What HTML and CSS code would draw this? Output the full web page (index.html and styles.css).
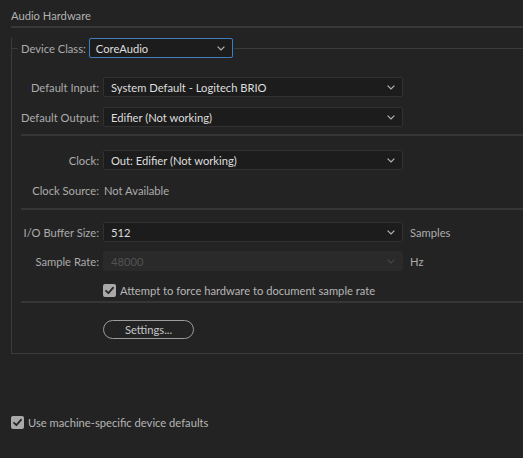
FILE: index.html
```html
<!DOCTYPE html>
<html>
<head>
<meta charset="utf-8">
<link rel="stylesheet" href="styles.css">
</head>
<body>
<div class="page">
  <div class="title">Audio Hardware</div>
  <div class="group">
    <div class="legend-row">
      <span class="seg-short"></span>
      <span class="legend-label">Device Class:</span>
      <div class="select focus legend-select"><span class="val">CoreAudio</span><svg class="chev" viewBox="0 0 8 5"><path d="M0.6 0.6 L4 4 L7.4 0.6" /></svg></div>
      <span class="seg-long"></span>
    </div>
    <div class="inner">
      <div class="row r-input">
        <span class="label">Default Input:</span>
        <div class="select"><span class="val">System Default - Logitech BRIO</span><svg class="chev" viewBox="0 0 8 5"><path d="M0.6 0.6 L4 4 L7.4 0.6" /></svg></div>
      </div>
      <div class="row r-output">
        <span class="label">Default Output:</span>
        <div class="select"><span class="val">Edifier (Not working)</span><svg class="chev" viewBox="0 0 8 5"><path d="M0.6 0.6 L4 4 L7.4 0.6" /></svg></div>
      </div>
      <div class="sep sep1"></div>
      <div class="row r-clock">
        <span class="label">Clock:</span>
        <div class="select"><span class="val">Out: Edifier (Not working)</span><svg class="chev" viewBox="0 0 8 5"><path d="M0.6 0.6 L4 4 L7.4 0.6" /></svg></div>
      </div>
      <div class="row r-source">
        <span class="label">Clock Source:</span>
        <span class="plain">Not Available</span>
      </div>
      <div class="sep sep2"></div>
      <div class="row r-buffer">
        <span class="label">I/O Buffer Size:</span>
        <div class="select"><span class="val">512</span><svg class="chev" viewBox="0 0 8 5"><path d="M0.6 0.6 L4 4 L7.4 0.6" /></svg></div>
        <span class="unit">Samples</span>
      </div>
      <div class="row r-rate">
        <span class="label">Sample Rate:</span>
        <div class="select disabled"><span class="val">48000</span><svg class="chev" viewBox="0 0 8 5"><path d="M0.6 0.6 L4 4 L7.4 0.6" /></svg></div>
        <span class="unit">Hz</span>
      </div>
      <div class="row r-force">
        <span class="label"></span>
        <span class="check"><svg viewBox="0 0 13 13"><path d="M3 6.8 L5.4 9.2 L10 3.8" /></svg></span>
        <span class="check-text">Attempt to force hardware to document sample rate</span>
      </div>
      <div class="sep sep3"></div>
      <div class="row r-settings">
        <span class="label"></span>
        <button class="btn">Settings...</button>
      </div>
    </div>
  </div>
  <div class="bottom-check">
    <span class="check"><svg viewBox="0 0 13 13"><path d="M3 6.8 L5.4 9.2 L10 3.8" /></svg></span>
    <span class="check-text">Use machine-specific device defaults</span>
  </div>
</div>
</body>
</html>
```

FILE: styles.css
```css
html, body {
  margin: 0;
  padding: 0;
  background: #232323;
  width: 523px;
  height: 458px;
  overflow: hidden;
}

body {
  font-family: "Lato", "Open Sans", sans-serif;
  font-size: 11.2px;
  color: #acacac;
}

.page {
  padding-left: 11px;
}

.title {
  height: 26px;
  line-height: 32px;
  border-bottom: 2px solid #383838;
  color: #b2b2b2;
}

.group {
  margin-top: 20px;
  border-left: 1px solid #3b3b3b;
  border-bottom: 1px solid #3b3b3b;
  padding-bottom: 14px;
}

.legend-row {
  display: flex;
  align-items: center;
  height: 20px;
  margin-top: -10px;
}

.seg-short {
  width: 6px;
  border-top: 1px solid #3b3b3b;
  height: 0;
}

.seg-long {
  flex: 1;
  border-top: 1px solid #3b3b3b;
  height: 0;
}

.legend-label {
  padding: 0 3px 0 3px;
}

.select {
  box-sizing: border-box;
  width: 300px;
  height: 20px;
  background: #1c1c1c;
  border: 1px solid #313131;
  border-radius: 2px;
  display: flex;
  align-items: center;
  padding: 0 7px 0 7px;
  color: #dedede;
}

.select .val {
  flex: 1;
}

.chev {
  width: 8px;
  height: 5px;
  fill: none;
  stroke: #b4b4b4;
  stroke-width: 1.2;
}

.select.focus {
  width: 144px;
  border: 1.5px solid #3f7fbf;
  border-radius: 2px;
  padding-left: 6px;
}

.legend-select {
  margin-right: 1px;
}

.select.disabled {
  background: #2a2a2a;
  border-color: #2a2a2a;
  color: #535353;
}

.select.disabled .chev {
  stroke: #464646;
}

.inner {
  padding-left: 9px;
  padding-top: 19px;
}

.row {
  display: flex;
  align-items: center;
  height: 20px;
}

.label {
  width: 78px;
  text-align: right;
  margin-right: 4px;
  flex: none;
}

.r-output { margin-top: 10px; }
.sep {
  height: 2px;
  background: #363636;
}
.sep1 { margin-top: 7px; }
.r-clock { margin-top: 14px; }
.r-source { margin-top: 10px; }
.sep2 { margin-top: 8px; }
.r-buffer { margin-top: 12px; }
.r-rate { margin-top: 9px; }
.r-force { margin-top: 12px; height: 14px; }
.sep3 { margin-top: 4px; }
.r-settings { margin-top: 17px; height: 19px; }

.plain {
  margin-left: 1px;
}

.unit {
  margin-left: 7px;
}

.check {
  width: 13px;
  height: 13px;
  background: #a9a9a9;
  border-radius: 2px;
  display: inline-flex;
  flex: none;
}

.check svg {
  width: 13px;
  height: 13px;
  fill: none;
  stroke: #262626;
  stroke-width: 1.8;
  stroke-linecap: round;
  stroke-linejoin: round;
}

.check-text {
  margin-left: 4px;
  color: #b6b6b6;
}

.btn {
  box-sizing: border-box;
  width: 91px;
  height: 19px;
  border: 1.5px solid #9c9c9c;
  border-radius: 10px;
  background: transparent;
  color: #c6c6c6;
  font-family: "Lato", "Open Sans", sans-serif;
  font-size: 11.2px;
  padding: 0;
  line-height: 15px;
}

.bottom-check {
  display: flex;
  align-items: center;
  margin-top: 61px;
  height: 14px;
}
```
